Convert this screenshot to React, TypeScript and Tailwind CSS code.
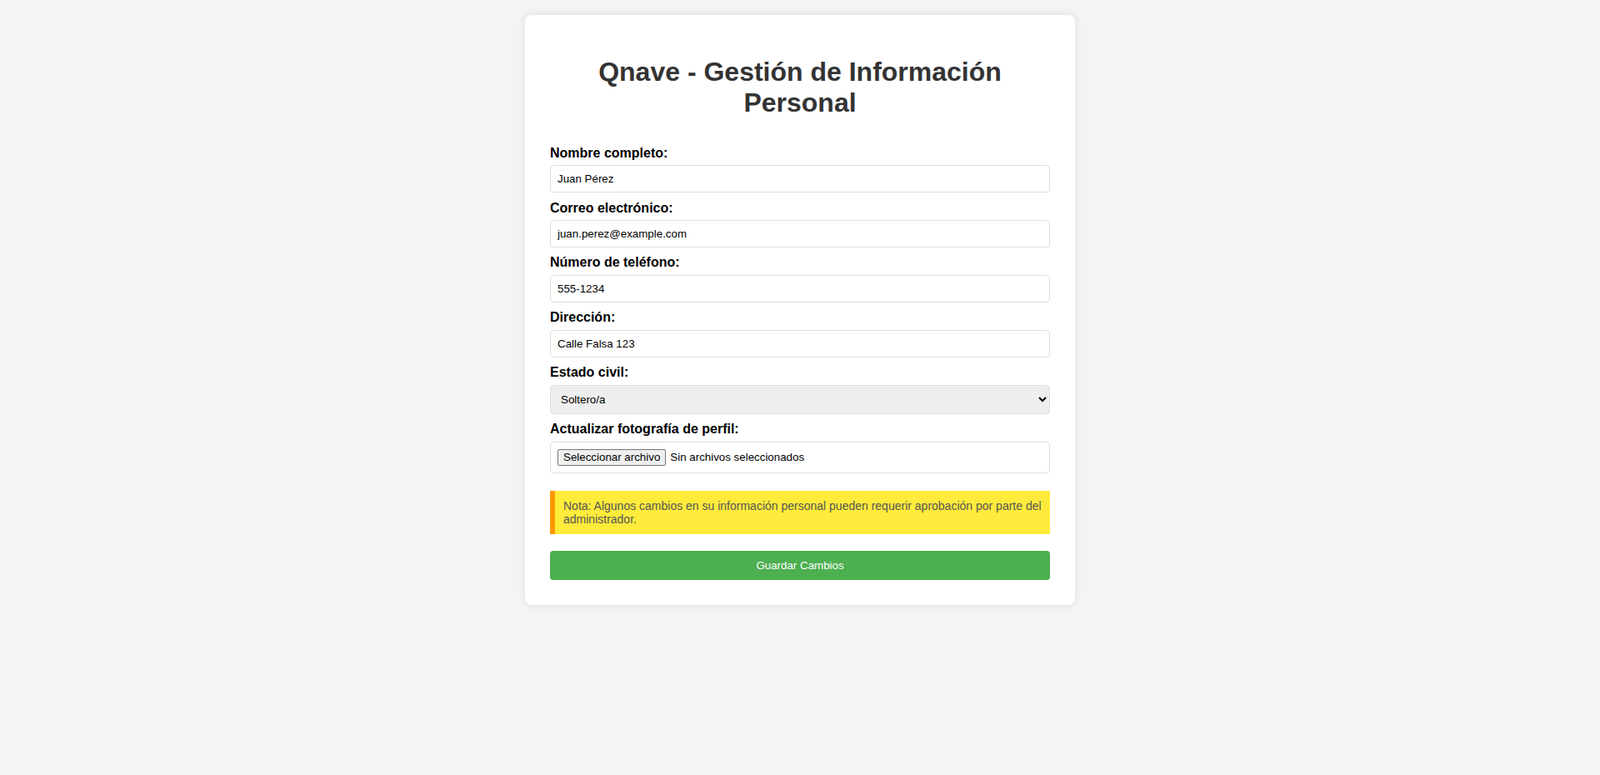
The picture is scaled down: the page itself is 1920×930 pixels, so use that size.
const fields = [
  { id: "nombre", label: "Nombre completo:", value: "Juan Pérez" },
  { id: "correo", label: "Correo electrónico:", value: "juan.perez@example.com" },
  { id: "telefono", label: "Número de teléfono:", value: "555-1234" },
  { id: "direccion", label: "Dirección:", value: "Calle Falsa 123" },
];

const App = () => {
  return (
    <div className="min-h-screen bg-[#f4f4f4] pt-[18px] font-['Liberation_Sans',Arial,sans-serif]">
      <div className="mx-auto w-[660px] rounded-lg bg-white p-[30px] shadow-[0_0_10px_rgba(0,0,0,0.1)]">
        <h1 className="mb-[33px] mt-[20px] text-center text-[32px] font-bold leading-[36.8px] text-[#333]">
          Qnave - Gestión de Información Personal
        </h1>
        <form onSubmit={(e) => e.preventDefault()}>
          {fields.map((f) => (
            <div key={f.id}>
              <label htmlFor={f.id} className="mb-[5px] block text-[16px] font-bold leading-[18.4px] text-black">
                {f.label}
              </label>
              <input
                id={f.id}
                type="text"
                defaultValue={f.value}
                className="mb-[9.5px] block h-[33px] w-full rounded border border-[#ddd] px-2 text-[13.333px] text-black outline-none"
              />
            </div>
          ))}
          <label htmlFor="estado" className="mb-[5px] block text-[16px] font-bold leading-[18.4px] text-black">
            Estado civil:
          </label>
          <select
            id="estado"
            defaultValue="soltero"
            className="mb-[9.5px] block h-[35px] w-full rounded border border-[#ddd] bg-[#eee] px-2 text-[13.333px] text-black"
          >
            <option value="soltero">Soltero/a</option>
            <option value="casado">Casado/a</option>
            <option value="divorciado">Divorciado/a</option>
            <option value="viudo">Viudo/a</option>
          </select>
          <label className="mb-[5px] block text-[16px] font-bold leading-[18.4px] text-black">
            Actualizar fotografía de perfil:
          </label>
          <div className="flex h-[38.5px] w-full items-center gap-[5px] rounded border border-[#ddd] px-2 text-[13.333px] text-black">
            <button
              type="button"
              className="h-[20px] rounded-[2px] border border-[#767676] bg-[#efefef] px-[6px] leading-[15px] text-black"
            >
              Seleccionar archivo
            </button>
            <span>Sin archivos seleccionados</span>
          </div>
          <div className="mt-[21px] border-l-[6px] border-[#ff9800] bg-[#ffeb3b] p-[10px] text-[14px] leading-[16px] text-[#555]">
            Nota: Algunos cambios en su información personal pueden requerir aprobación por parte del administrador.
          </div>
          <button
            type="submit"
            className="mt-[20px] block h-[35px] w-full rounded bg-[#4caf50] text-[13.333px] text-white"
          >
            Guardar Cambios
          </button>
        </form>
      </div>
    </div>
  );
};

export default App;
